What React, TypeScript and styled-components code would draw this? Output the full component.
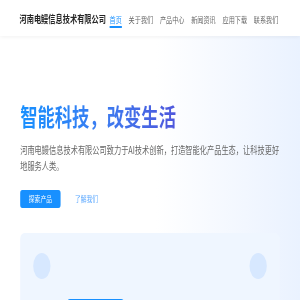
import styled, { createGlobalStyle } from "styled-components";

// The reference is a ~416px wide page squeezed into 300px horizontally.
const PAGE_WIDTH = 416;
const SQUEEZE = 300 / PAGE_WIDTH;

const GlobalStyle = createGlobalStyle`
  html, body {
    margin: 0;
    padding: 0;
    background: #ffffff;
    overflow: hidden;
  }
  body {
    font-family: "Noto Sans CJK SC", "Noto Sans", sans-serif;
  }
`;

const Page = styled.div`
  width: ${PAGE_WIDTH}px;
  height: 300px;
  overflow: hidden;
  transform: scaleX(${SQUEEZE});
  transform-origin: left top;
  display: flex;
  flex-direction: column;
  background: linear-gradient(90deg, #ffffff 0%, #ffffff 52%, #eaf2ff 100%);
`;

const Header = styled.header`
  flex-shrink: 0;
  height: 36px;
  padding: 0 30px 0 27px;
  display: flex;
  align-items: center;
  justify-content: space-between;
  background: #ffffff;
  box-shadow: 0 1px 5px rgba(0, 0, 0, 0.06);
  position: relative;
  z-index: 1;
`;

const Logo = styled.div`
  font-size: 10px;
  font-weight: 700;
  color: #262626;
  line-height: 12px;
  padding-top: 1px;
`;

const Nav = styled.nav`
  display: flex;
  gap: 9.4px;
`;

const NavItem = styled.a<{ $active?: boolean }>`
  font-size: 8.5px;
  line-height: 12px;
  padding: 4px 0 1px;
  color: ${(p) => (p.$active ? "#1890ff" : "#666666")};
  border-bottom: 2px solid ${(p) => (p.$active ? "#1890ff" : "transparent")};
  text-decoration: none;
`;

const Hero = styled.section`
  flex: 1;
  min-height: 0;
  padding: 63px 28px 0;
  display: flex;
  flex-direction: column;
  align-items: flex-start;
`;

const Title = styled.h1`
  margin: 0 0 9px;
  font-size: 24px;
  line-height: 34px;
  font-weight: 700;
  background: linear-gradient(90deg, #1890ff 0%, #3d7bf0 55%, #4f57dc 100%);
  -webkit-background-clip: text;
  background-clip: text;
  color: transparent;
`;

const Lead = styled.p`
  margin: 0;
  max-width: 364px;
  font-size: 10px;
  line-height: 16px;
  color: #666666;
`;

const ButtonRow = styled.div`
  display: flex;
  gap: 8px;
  margin-top: 16px;
`;

const Button = styled.a<{ $primary?: boolean }>`
  display: block;
  font-size: 8px;
  line-height: 12px;
  padding: 3px 12px;
  border-radius: 3px;
  text-decoration: none;
  color: ${(p) => (p.$primary ? "#ffffff" : "#5ba8ff")};
  background: ${(p) => (p.$primary ? "#1890ff" : "transparent")};
`;

const Showcase = styled.div`
  align-self: stretch;
  flex-shrink: 0;
  margin-top: 25px;
  padding: 20px 18px 0;
  background: #eff6ff;
  border-radius: 6px 6px 0 0;
  display: flex;
  flex-direction: column;
  height: 80px;
`;

const DotRow = styled.div`
  display: flex;
  justify-content: space-between;
`;

const Dot = styled.div`
  width: 24px;
  height: 26px;
  border-radius: 50%;
  background: #d7e8ff;
`;

const Device = styled.div`
  margin: 20px 0 0 46px;
  width: 81px;
  height: 30px;
  border-radius: 5px 5px 0 0;
  background: #1890ff;
`;

const navLinks = ["首页", "关于我们", "产品中心", "新闻资讯", "应用下载", "联系我们"];

export default function App() {
  return (
    <>
      <GlobalStyle />
      <Page>
        <Header>
          <Logo>河南电鳗信息技术有限公司</Logo>
          <Nav>
            {navLinks.map((label, i) => (
              <NavItem key={label} $active={i === 0}>
                {label}
              </NavItem>
            ))}
          </Nav>
        </Header>
        <Hero>
          <Title>智能科技，改变生活</Title>
          <Lead>
            河南电鳗信息技术有限公司致力于AI技术创新，打造智能化产品生态，让科技更好地服务人类。
          </Lead>
          <ButtonRow>
            <Button $primary>探索产品</Button>
            <Button>了解我们</Button>
          </ButtonRow>
          <Showcase>
            <DotRow>
              <Dot />
              <Dot />
            </DotRow>
            <Device />
          </Showcase>
        </Hero>
      </Page>
    </>
  );
}
